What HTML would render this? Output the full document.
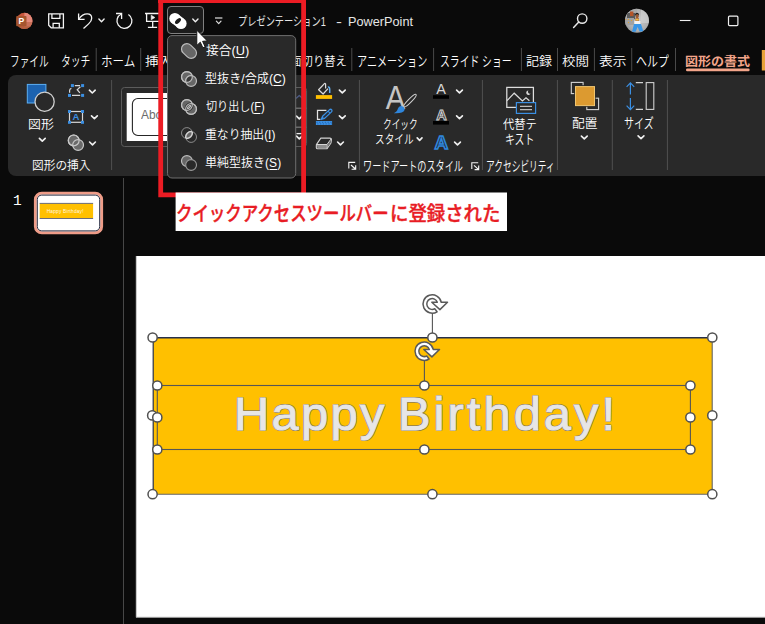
<!DOCTYPE html>
<html lang="ja"><head><meta charset="utf-8"><title>PowerPoint</title>
<style>
html,body{margin:0;padding:0;background:#0a0a0a;}
body{width:765px;height:624px;position:relative;overflow:hidden;font-family:'Liberation Sans','Noto Sans CJK JP',sans-serif;}
.abs{position:absolute;}
.t{position:absolute;white-space:nowrap;transform-origin:0 50%;display:inline-block;}
.t u{text-decoration:underline;text-underline-offset:1.5px;text-decoration-thickness:1px;}
.hb{position:absolute;top:381.7px;height:64px;font:400 46.4px/64px "Liberation Sans",sans-serif;color:#e7e6e6;white-space:nowrap;transform-origin:0 50%;transform:scaleX(1.05);-webkit-text-stroke:1px #e7e6e6;text-shadow:1.2px 0px 0 rgba(120,112,98,0.6),-1.2px 0px 0 rgba(120,112,98,0.6),0px 1.2px 0 rgba(120,112,98,0.6),0px -1.2px 0 rgba(120,112,98,0.6),0.85px 0.85px 0 rgba(120,112,98,0.6),-0.85px 0.85px 0 rgba(120,112,98,0.6),0.85px -0.85px 0 rgba(120,112,98,0.6),-0.85px -0.85px 0 rgba(120,112,98,0.6);}
</style></head><body>

<svg class="abs" width="765" height="624" viewBox="0 0 765 624" style="left:0;top:0">
<!-- powerpoint logo -->
<defs><clipPath id="ppc"><circle cx="24.4" cy="20.9" r="8.1"/></clipPath>
<clipPath id="avc"><circle cx="637" cy="20.8" r="12"/></clipPath>
<radialGradient id="avg" cx="0.55" cy="0.45" r="0.7"><stop offset="0" stop-color="#cecece"/><stop offset="0.6" stop-color="#adadad"/><stop offset="1" stop-color="#7c7c7c"/></radialGradient>
</defs>
<g clip-path="url(#ppc)"><rect x="15" y="12" width="18" height="18" fill="#c9573c"/><rect x="24.4" y="12" width="10" height="10" fill="#e4897a"/><rect x="24.4" y="22" width="10" height="5" fill="#c97058"/><rect x="15" y="26.4" width="20" height="5" fill="#b5603f"/></g>
<rect x="16.2" y="16.1" width="10.3" height="10.2" rx="0.8" fill="#a5552f"/>
<text x="21.4" y="24.2" font-family='"Liberation Sans",sans-serif' font-weight="700" font-size="8.6" fill="#fff" text-anchor="middle">P</text>
<!-- save -->
<path d="M48.7 13.9 H63.4 V27.8 H51.2 L48.7 25.3 Z" fill="none" stroke="#f4f4f4" stroke-width="1.3" stroke-linejoin="miter"/>
<path d="M51.9 13.9 V18.3 H59.9 V13.9 M53.1 27.8 V23.3 H59.3 V27.8" fill="none" stroke="#f4f4f4" stroke-width="1.3"/>
<!-- undo -->
<path d="M78.6 13.4 V19.3 H84.6" fill="none" stroke="#f4f4f4" stroke-width="1.3"/>
<path d="M78.9 19 C81.2 15.6 84.4 13.9 87.2 13.9 C90 13.9 91.7 15.8 91.7 18.2 C91.7 20.6 90.4 22.2 88.6 23.9 L83.5 28.6" fill="none" stroke="#f4f4f4" stroke-width="1.3"/>
<path d="M98.9 19.1 L101.5 21.7 L104.1 19.1" fill="none" stroke="#f0f0f0" stroke-width="1.4" stroke-linecap="round" stroke-linejoin="round"/>
<!-- redo -->
<path d="M121.4 14 A7.5 7.5 0 1 0 128.4 14.5" fill="none" stroke="#f4f4f4" stroke-width="1.3"/>
<path d="M116 13.5 H121.6 V19" fill="none" stroke="#f4f4f4" stroke-width="1.3"/>
<!-- present -->
<path d="M145 13.5 H161 M146.6 13.5 V21.3 H161 M152.7 21.3 V27.4 M147.9 27.4 H157.1" fill="none" stroke="#f4f4f4" stroke-width="1.3"/>
<path d="M151.2 15.2 L154.9 17.5 L151.2 19.8 Z" fill="#f0f0f0" stroke="#f4f4f4" stroke-width="0.6" stroke-linejoin="round"/>
<!-- qat button -->
<rect x="167.5" y="6.5" width="36" height="27" rx="3.5" fill="#1c1c1c" stroke="#808080" stroke-width="1"/>
<circle cx="174.9" cy="18.5" r="5.6" fill="#fff"/><circle cx="181" cy="23.5" r="5.6" fill="#fff"/><path d="M175.4 19 L180.6 23" stroke="#fff" stroke-width="11"/>
<ellipse cx="178" cy="21" rx="3.6" ry="1.9" fill="#1c1c1c" transform="rotate(-42 178 21)"/>
<path d="M192.8 19.1 L195.4 21.7 L198.0 19.1" fill="none" stroke="#f0f0f0" stroke-width="1.4" stroke-linecap="round" stroke-linejoin="round"/>
<!-- customize qat -->
<path d="M215 18 H222.4" stroke="#e0e0e0" stroke-width="1.2" fill="none"/>
<path d="M216.4 21.2 L218.7 23.6 L221.0 21.2" fill="none" stroke="#e0e0e0" stroke-width="1.2" stroke-linecap="round" stroke-linejoin="round"/>
<!-- search -->
<circle cx="582.2" cy="18.6" r="4.7" fill="none" stroke="#e8e8e8" stroke-width="1.4"/>
<path d="M578.8 22 L573.6 27.4" stroke="#e8e8e8" stroke-width="1.5" stroke-linecap="round"/>
<!-- avatar -->
<g clip-path="url(#avc)"><rect x="624" y="8" width="26" height="26" fill="url(#avg)"/>
<rect x="624" y="8" width="13" height="12" fill="#a9a9a9"/><rect x="627" y="13" width="8" height="6" fill="#5a5a5a"/><rect x="630" y="11.5" width="3.4" height="4.6" fill="#b4552a"/>
<rect x="625" y="18" width="9" height="7" fill="#a2a2a2"/><rect x="625.4" y="19" width="1" height="1" fill="#e0952f"/><rect x="628" y="19" width="1" height="1" fill="#e0a32f"/><rect x="631" y="20" width="1" height="1" fill="#e0a32f"/><rect x="628" y="22" width="1" height="1" fill="#e0a32f"/>
<rect x="641" y="9" width="9" height="14" fill="#d4d4d4" opacity="0.6"/>
<ellipse cx="637" cy="14.4" rx="1.9" ry="1.6" fill="#1d1d1d"/><ellipse cx="637.2" cy="16.2" rx="1.5" ry="2.1" fill="#9b5a33"/>
<rect x="635.4" y="18" width="3.6" height="3.6" fill="#b87a4a"/><rect x="635.6" y="19" width="3" height="1.4" fill="#f0c040"/><rect x="634.4" y="21" width="6" height="3.4" fill="#f4f4f4"/>
<path d="M634 24 H641 L643.4 31.5 H639.6 L637.6 27 L635.6 31.8 H632 Z" fill="#3a96e6"/>
</g>
<!-- window buttons -->
<path d="M679.8 20.5 H690.6" stroke="#f0f0f0" stroke-width="1.1"/>
<rect x="728.5" y="16.2" width="9.4" height="9.4" rx="1" fill="none" stroke="#f0f0f0" stroke-width="1.2"/>
<!-- tab separators -->
<rect x="95.7" y="48" width="1" height="23" fill="#4a4a4a"/><rect x="140.2" y="48" width="1" height="23" fill="#4a4a4a"/><rect x="351.3" y="48" width="1" height="23" fill="#4a4a4a"/><rect x="433.1" y="48" width="1" height="23" fill="#4a4a4a"/><rect x="520.9" y="48" width="1" height="23" fill="#4a4a4a"/><rect x="557.0" y="48" width="1" height="23" fill="#4a4a4a"/><rect x="593.9" y="48" width="1" height="23" fill="#4a4a4a"/><rect x="631.2" y="48" width="1" height="23" fill="#4a4a4a"/><rect x="675.0" y="48" width="1" height="23" fill="#4a4a4a"/>
<rect x="686" y="68.6" width="63.6" height="2.6" rx="1.2" fill="#f3a58a"/>
<rect x="761.8" y="50" width="4" height="20.5" fill="#e8a33a"/>
<!-- ribbon -->
<rect x="8" y="75" width="770" height="101" rx="8" fill="#292929"/>
<!-- group: insert shapes -->
<rect x="27.3" y="84.4" width="18.6" height="18.6" fill="#1c63b0" stroke="#5cb0f4" stroke-width="1"/>
<circle cx="44.6" cy="101.7" r="9.6" fill="#292929" stroke="#cfcfcf" stroke-width="1.3"/>
<path d="M39.4 138.4 L42.3 141.2 L45.2 138.4" fill="none" stroke="#f0f0f0" stroke-width="1.65" stroke-linecap="round" stroke-linejoin="round"/>
<!-- edit shape -->
<path d="M69.6 92.8 V90.6 Q69.6 88.8 71.4 88.4" fill="none" stroke="#d8d8d8" stroke-width="1.2"/>
<path d="M74.8 85.6 H80 M72 95.4 H80.2" fill="none" stroke="#d8d8d8" stroke-width="1.2"/>
<path d="M80.4 86.8 L77.2 89.7 L79.9 92.8" fill="none" stroke="#d8d8d8" stroke-width="1.2"/>
<g fill="#3b8fe2"><rect x="70.9" y="84.1" width="3" height="3"/><rect x="81.1" y="84.1" width="3" height="3"/><rect x="68" y="93.9" width="3" height="3"/><rect x="81.1" y="93.9" width="3" height="3"/></g>
<path d="M89.4 90.2 L92.3 93.0 L95.2 90.2" fill="none" stroke="#f0f0f0" stroke-width="1.65" stroke-linecap="round" stroke-linejoin="round"/>
<!-- text box -->
<rect x="69.5" y="111.5" width="13" height="10.8" fill="none" stroke="#d8d8d8" stroke-width="1.2"/>
<g fill="#3b8fe2"><rect x="68" y="110" width="3" height="3"/><rect x="81" y="110" width="3" height="3"/><rect x="68" y="120.8" width="3" height="3"/><rect x="81" y="120.8" width="3" height="3"/></g>
<text x="76" y="120.1" font-family='"Liberation Sans",sans-serif' font-size="9.6" font-weight="700" fill="#3b8fe2" text-anchor="middle">A</text>
<path d="M91.5 115.9 L94.4 118.7 L97.3 115.9" fill="none" stroke="#f0f0f0" stroke-width="1.65" stroke-linecap="round" stroke-linejoin="round"/>
<!-- merge shapes -->
<circle cx="73.7" cy="140.4" r="5.4" fill="#6a6a6a" stroke="#c8c8c8" stroke-width="1.2"/>
<circle cx="78.1" cy="145" r="5.4" fill="#6a6a6a" stroke="#c8c8c8" stroke-width="1.2"/>
<circle cx="73.7" cy="140.4" r="5.4" fill="none" stroke="#c8c8c8" stroke-width="1.2"/>
<path d="M89.6 142.0 L92.5 144.8 L95.4 142.0" fill="none" stroke="#f0f0f0" stroke-width="1.65" stroke-linecap="round" stroke-linejoin="round"/>
<rect x="111.1" y="80" width="1" height="90" fill="#505050"/>
<!-- gallery -->
<rect x="121.5" y="87.5" width="185.1" height="59" rx="3" fill="none" stroke="#5c5c5c" stroke-width="1"/>
<rect x="126.7" y="93" width="60" height="48" fill="#fff"/>
<rect x="132.4" y="98.5" width="60" height="37" rx="5.5" fill="#fff" stroke="#262626" stroke-width="1.1"/>
<!-- gallery scroll -->
<path d="M292 108.2 H306.4 M292 127.3 H306.4" stroke="#6a6a6a" stroke-width="1.6"/>
<path d="M296.5 98.1 L299.3 95.5 L302.1 98.1" fill="none" stroke="#4c5a86" stroke-width="1.3" stroke-linecap="round" stroke-linejoin="round"/>
<path d="M296.5 116.2 L299.3 118.8 L302.1 116.2" fill="none" stroke="#f0f0f0" stroke-width="1.65" stroke-linecap="round" stroke-linejoin="round"/>
<path d="M296.4 133.6 H302.2" stroke="#ececec" stroke-width="1.3"/><path d="M296.5 136.2 L299.3 138.9 L302.1 136.2" fill="none" stroke="#f0f0f0" stroke-width="1.65" stroke-linecap="round" stroke-linejoin="round"/>
<!-- shape fill -->
<path d="M324.2 83.9 L318.6 89.7 L323.1 94 L328 88.7" fill="none" stroke="#dcdcdc" stroke-width="1.25" stroke-linejoin="round"/>
<path d="M324.2 84 Q324.9 82.9 325.6 84 V88.6" fill="none" stroke="#dcdcdc" stroke-width="1.2"/>
<path d="M327.9 87.1 Q329.7 86.7 329.7 89.2 V93" fill="none" stroke="#64b2f4" stroke-width="1.5"/>
<rect x="315.9" y="95.1" width="16.2" height="3.8" fill="#ffc000"/>
<path d="M339.4 90.1 L342.3 92.9 L345.2 90.1" fill="none" stroke="#f0f0f0" stroke-width="1.65" stroke-linecap="round" stroke-linejoin="round"/>
<!-- shape outline -->
<path d="M320.4 119.3 H317.5 V110.4 H326.4" fill="none" stroke="#e4e4e4" stroke-width="1.25"/>
<path d="M321.2 119.5 L322.6 116.2 L329.6 109.6 Q330.8 108.8 331.7 109.8 Q332.5 110.8 331.5 111.9 L324.6 118.4 Z" fill="#262c36" stroke="#3b8fe2" stroke-width="1.3" stroke-linejoin="round"/>
<path d="M328 111.2 L330 113.2" stroke="#3b8fe2" stroke-width="1.1"/>
<path d="M321.2 119.5 L322.4 116.6 L324.2 118.2 Z" fill="#3b8fe2"/>
<rect x="315.9" y="121" width="16.2" height="4" fill="#3b8fe2"/>
<path d="M316.4 122.3 H332 M317.2 123.9 H332" stroke="#1b5ea8" stroke-width="0.8" stroke-dasharray="1.2 1.6"/>
<path d="M339.4 115.9 L342.3 118.7 L345.2 115.9" fill="none" stroke="#f0f0f0" stroke-width="1.65" stroke-linecap="round" stroke-linejoin="round"/>
<!-- shape effects -->
<path d="M316.4 144.6 L320.8 138.1 H329.8 Q331.6 138.1 331.4 139.9 L331 143 L327 148.8 H317.6 Q316.3 148.8 316.3 147.5 Z" fill="#292929" stroke="#d4d4d4" stroke-width="1.1" stroke-linejoin="round"/>
<path d="M316.9 145 H326.6 V148.3 H317.4 Z" fill="#8e8e8e"/>
<path d="M327.3 144.8 L330.9 140 L330.6 142.8 L327.3 147.6 Z" fill="#7a7a7a"/>
<path d="M316.6 144.5 H327 L331.2 138.8 M327 144.5 V148.6" fill="none" stroke="#d4d4d4" stroke-width="1"/>
<path d="M337.6 142.0 L340.5 144.8 L343.4 142.0" fill="none" stroke="#f0f0f0" stroke-width="1.65" stroke-linecap="round" stroke-linejoin="round"/>
<path d="M348.8 168.6 V162.4 H355.2" fill="none" stroke="#f4f4f4" stroke-width="1.1"/><path d="M351.0 165.0 L355.4 169.0 M351.6 169.2 H355.7 V165.2" fill="none" stroke="#f4f4f4" stroke-width="1.1"/><path d="M355.7 169.3 H353.2 L355.7 166.8 Z" fill="#f4f4f4"/>
<rect x="358.9" y="80" width="1" height="90" fill="#505050"/>
<!-- quick styles big A -->
<text x="395.4" y="109" font-family='"Liberation Sans",sans-serif' font-size="32.5" fill="#c4c4c4" text-anchor="middle" transform="translate(395.4 0) scale(0.9 1) translate(-395.4 0)">A</text>
<ellipse cx="410" cy="100.6" rx="8.6" ry="1.7" transform="rotate(-45 410 100.6)" fill="#292929" stroke="#cfcfcf" stroke-width="1.1"/>
<path d="M402 106.2 Q405.2 107.2 404.6 110 Q403 113.8 393.8 113.2 Q397.4 111.6 397.8 108.8 Q398.8 105.6 402 106.2 Z" fill="#2f86dc"/>
<path d="M417.2 137.9 L419.6 140.4 L422.0 137.9" fill="none" stroke="#f0f0f0" stroke-width="1.65" stroke-linecap="round" stroke-linejoin="round"/>
<!-- text fill -->
<text x="441.2" y="93.9" font-family='"Liberation Sans",sans-serif' font-size="14.5" fill="#d8d8d8" text-anchor="middle">A</text>
<rect x="433" y="95.2" width="16" height="3.6" fill="#000"/>
<path d="M456.6 90.1 L459.5 92.9 L462.4 90.1" fill="none" stroke="#f0f0f0" stroke-width="1.65" stroke-linecap="round" stroke-linejoin="round"/>
<!-- text outline -->
<text x="441.4" y="119.8" font-family='"Liberation Sans",sans-serif' font-size="14.5" font-weight="700" fill="#2d2d2d" stroke="#d2d2d2" stroke-width="0.95" text-anchor="middle">A</text>
<rect x="433" y="121" width="16" height="3.6" fill="#000"/>
<path d="M456.6 115.9 L459.5 118.7 L462.4 115.9" fill="none" stroke="#f0f0f0" stroke-width="1.65" stroke-linecap="round" stroke-linejoin="round"/>
<!-- text effects -->
<text x="441.3" y="149.4" font-family='"Liberation Sans",sans-serif' font-size="19" font-weight="700" fill="#22303f" stroke="#2f86dc" stroke-width="1.5" text-anchor="middle">A</text>
<path d="M454.6 142.1 L457.5 144.9 L460.4 142.1" fill="none" stroke="#f0f0f0" stroke-width="1.65" stroke-linecap="round" stroke-linejoin="round"/>
<path d="M471.8 169.0 V162.8 H478.2" fill="none" stroke="#f4f4f4" stroke-width="1.1"/><path d="M474.0 165.4 L478.4 169.4 M474.6 169.6 H478.7 V165.6" fill="none" stroke="#f4f4f4" stroke-width="1.1"/><path d="M478.7 169.7 H476.2 L478.7 167.2 Z" fill="#f4f4f4"/>
<rect x="481.9" y="80" width="1" height="90" fill="#505050"/>
<!-- alt text -->
<rect x="506.8" y="87.4" width="26.6" height="20" fill="none" stroke="#dedede" stroke-width="1.25"/>
<path d="M507 100.6 L514.2 93.2 L522.4 101 L526 97.8 L529.4 100.8" fill="none" stroke="#dedede" stroke-width="1.2"/>
<path d="M528.4 90.4 A2.3 2.3 0 1 0 530.6 93.6 A2 2 0 0 1 528.4 90.4 Z" fill="#d8d8d8"/>
<rect x="516.4" y="102.6" width="19.2" height="10.8" fill="#292929" stroke="#3b8fe2" stroke-width="1.2"/>
<path d="M520 106.4 H532 M520 109.6 H532" stroke="#bdbdbd" stroke-width="1.1"/>
<rect x="556.9" y="80" width="1" height="90" fill="#505050"/>
<!-- arrange -->
<rect x="571.3" y="82.4" width="11.8" height="11.2" fill="none" stroke="#d4d4d4" stroke-width="1.1"/>
<rect x="586.8" y="98.2" width="11.8" height="11.4" fill="none" stroke="#d4d4d4" stroke-width="1.1"/>
<rect x="574.2" y="85.2" width="21.4" height="21.6" fill="#292929"/>
<rect x="575.5" y="86.6" width="19" height="19" fill="#dc9a30" stroke="#f0c570" stroke-width="1"/>
<path d="M581.4 136.1 L584.3 138.9 L587.2 136.1" fill="none" stroke="#f0f0f0" stroke-width="1.65" stroke-linecap="round" stroke-linejoin="round"/>
<rect x="611.8" y="80" width="1" height="90" fill="#505050"/>
<!-- size -->
<path d="M630.4 83 V94.6 M626.6 86.8 L630.4 82.8 L634.2 86.8 M630.4 98 V109.4 M626.6 105.6 L630.4 109.6 L634.2 105.6" fill="none" stroke="#3b8fe2" stroke-width="1.2"/>
<rect x="646.2" y="82.6" width="7.6" height="26.8" fill="none" stroke="#d0d0d0" stroke-width="1.1"/>
<path d="M635.8 82.6 H643 M635.8 109.4 H643" stroke="#d0d0d0" stroke-width="1.1"/>
<path d="M638.1 135.8 L641.0 138.6 L643.9 135.8" fill="none" stroke="#f0f0f0" stroke-width="1.65" stroke-linecap="round" stroke-linejoin="round"/>
<rect x="666.9" y="80" width="1" height="90" fill="#505050"/>
<!-- pane divider -->
<rect x="123" y="178" width="1" height="446" fill="#474747"/>
<!-- thumbnail -->
<rect x="35.3" y="193.1" width="66.4" height="39.8" rx="6.5" fill="#fff" stroke="#ee9c88" stroke-width="2.8"/>
<rect x="37.3" y="195.1" width="62.4" height="35.8" rx="4.4" fill="none" stroke="#262b40" stroke-width="1"/>
<rect x="39.7" y="203.4" width="53.4" height="15" fill="#ffc000"/>
<path d="M39.7 203.4 H93.1 M39.7 218.5 H93.1" stroke="#5a5f78" stroke-width="0.9"/>
<text x="65.2" y="212.6" font-family='"Liberation Sans",sans-serif' font-size="4.8" fill="#fff" fill-opacity="0.9" text-anchor="middle" font-weight="400" letter-spacing="0.2">Happy Birthday!</text>
<!-- slide -->
<rect x="136" y="256" width="640" height="361.5" fill="#fff"/>
<path d="M136.2 256 V617.3 H765" fill="none" stroke="#a0a0a0" stroke-width="0.8"/>
<!-- shape -->
<rect x="153.2" y="337.6" width="559" height="156.6" fill="#ffc000"/>
<path d="M153.2 337.6 V494.2" stroke="#28304a" stroke-width="1.2"/>
<path d="M153.2 337.8 H712.2" stroke="#28304a" stroke-width="1.6"/>
<path d="M712.2 337.6 V494.2 H153.2" fill="none" stroke="#666" stroke-width="1.1"/>
<!-- inner text box -->
<rect x="157.3" y="385.5" width="533.1" height="64" fill="none" stroke="#565656" stroke-width="1.1"/>
<!-- rotate stems -->
<path d="M432.4 313 V337.4 M424.4 360 V385.5" stroke="#555" stroke-width="1.1"/>
</svg>
<span id="title1" class="t" style="left:238.25px;top:13.3px;font:400 12px/18.0px 'Liberation Sans','Noto Sans CJK JP',sans-serif;color:#e6e6e6;transform:scaleX(0.7679);">プレゼンテーション1</span>
<span id="title2" class="t" style="left:335.51px;top:13.3px;font:400 12px/18.0px 'Liberation Sans','Noto Sans CJK JP',sans-serif;color:#e6e6e6;transform:scaleX(1.4761);">-</span>
<span id="title3" class="t" style="left:347.86px;top:13.3px;font:400 12px/18.0px 'Liberation Sans','Noto Sans CJK JP',sans-serif;color:#e6e6e6;transform:scaleX(1.0599);">PowerPoint</span>
<span id="tab1" class="t" style="left:10.47px;top:50.5px;font:350 14px/21.0px 'Liberation Sans','Noto Sans CJK JP',sans-serif;color:#ffffff;transform:scaleX(0.6905);">ファイル</span>
<span id="tab2" class="t" style="left:61.39px;top:50.5px;font:350 14px/21.0px 'Liberation Sans','Noto Sans CJK JP',sans-serif;color:#ffffff;transform:scaleX(0.6988);">タッチ</span>
<span id="tab3" class="t" style="left:100.77px;top:50.5px;font:350 14px/21.0px 'Liberation Sans','Noto Sans CJK JP',sans-serif;color:#ffffff;transform:scaleX(0.8222);">ホーム</span>
<span id="tab4" class="t" style="left:145.43px;top:53.1px;font:350 12px/18.0px 'Liberation Sans','Noto Sans CJK JP',sans-serif;color:#ffffff;transform:scaleX(1.1353);">挿入</span>
<span id="tab5" class="t" style="left:279.32px;top:53.1px;font:350 12px/18.0px 'Liberation Sans','Noto Sans CJK JP',sans-serif;color:#ffffff;transform:scaleX(0.9413);">画面切り替え</span>
<span id="tab6" class="t" style="left:357.07px;top:50.5px;font:350 14px/21.0px 'Liberation Sans','Noto Sans CJK JP',sans-serif;color:#ffffff;transform:scaleX(0.7207);">アニメーション</span>
<span id="tab7" class="t" style="left:440.18px;top:50.5px;font:350 14px/21.0px 'Liberation Sans','Noto Sans CJK JP',sans-serif;color:#ffffff;transform:scaleX(0.7030);">スライド ショー</span>
<span id="tab8" class="t" style="left:526.36px;top:53.1px;font:350 12px/18.0px 'Liberation Sans','Noto Sans CJK JP',sans-serif;color:#ffffff;transform:scaleX(1.0879);">記録</span>
<span id="tab9" class="t" style="left:562.38px;top:53.1px;font:350 12px/18.0px 'Liberation Sans','Noto Sans CJK JP',sans-serif;color:#ffffff;transform:scaleX(1.1270);">校閲</span>
<span id="tab10" class="t" style="left:599.24px;top:53.1px;font:350 12px/18.0px 'Liberation Sans','Noto Sans CJK JP',sans-serif;color:#ffffff;transform:scaleX(1.1469);">表示</span>
<span id="tab11" class="t" style="left:636.05px;top:50.5px;font:350 14px/21.0px 'Liberation Sans','Noto Sans CJK JP',sans-serif;color:#ffffff;transform:scaleX(0.7825);">ヘルプ</span>
<span id="tab12" class="t" style="left:684.75px;top:53.1px;font:700 12px/18.0px 'Liberation Sans','Noto Sans CJK JP',sans-serif;color:#f3a58a;transform:scaleX(1.0859);">図形の書式</span>
<span id="r1" class="t" style="left:27.73px;top:116.3px;font:350 12px/18.0px 'Liberation Sans','Noto Sans CJK JP',sans-serif;color:#ffffff;transform:scaleX(1.0783);">図形</span>
<span id="r2" class="t" style="left:32.49px;top:157.2px;font:350 12px/18.0px 'Liberation Sans','Noto Sans CJK JP',sans-serif;color:#ffffff;transform:scaleX(0.9755);">図形の挿入</span>
<span id="r3" class="t" style="left:382.91px;top:116.4px;font:350 12.5px/18.8px 'Liberation Sans','Noto Sans CJK JP',sans-serif;color:#ffffff;transform:scaleX(0.6933);">クイック</span>
<span id="r4" class="t" style="left:374.58px;top:131.0px;font:350 12.5px/18.8px 'Liberation Sans','Noto Sans CJK JP',sans-serif;color:#ffffff;transform:scaleX(0.7703);">スタイル</span>
<span id="r5" class="t" style="left:362.60px;top:156.5px;font:350 13.5px/20.2px 'Liberation Sans','Noto Sans CJK JP',sans-serif;color:#ffffff;transform:scaleX(0.6768);">ワードアートのスタイル</span>
<span id="r6" class="t" style="left:502.77px;top:116.3px;font:350 12px/18.0px 'Liberation Sans','Noto Sans CJK JP',sans-serif;color:#ffffff;transform:scaleX(0.9418);">代替テ</span>
<span id="r7" class="t" style="left:505.03px;top:130.2px;font:350 13.5px/20.2px 'Liberation Sans','Noto Sans CJK JP',sans-serif;color:#ffffff;transform:scaleX(0.7319);">キスト</span>
<span id="r8" class="t" style="left:485.95px;top:156.5px;font:350 13.5px/20.2px 'Liberation Sans','Noto Sans CJK JP',sans-serif;color:#ffffff;transform:scaleX(0.6450);">アクセシビリティ</span>
<span id="r9" class="t" style="left:572.21px;top:114.6px;font:350 12px/18.0px 'Liberation Sans','Noto Sans CJK JP',sans-serif;color:#ffffff;transform:scaleX(1.0554);">配置</span>
<span id="r10" class="t" style="left:624.21px;top:113.5px;font:350 13.5px/20.2px 'Liberation Sans','Noto Sans CJK JP',sans-serif;color:#ffffff;transform:scaleX(0.7386);">サイズ</span>
<span id="abc" class="t" style="left:140.75px;top:106.3px;font:400 12px/18.0px 'Liberation Sans','Noto Sans CJK JP',sans-serif;color:#6b6b6b;transform:scaleX(0.9922);">Abc</span>
<span id="n1" class="t" style="left:12.89px;top:189.6px;font:400 15.5px/23.2px 'Liberation Mono',monospace;color:#ffffff;transform:scaleX(0.9350);">1</span>
<div id="hb" class="hb" style="left:234.2px;letter-spacing:2.3px">Happy</div><div id="hb2" class="hb" style="left:397.6px;letter-spacing:2.95px">Birthday!</div>

<svg class="abs" width="765" height="624" viewBox="0 0 765 624" style="left:0;top:0">
<g transform="translate(432.2,304)">
<path d="M-0.4 -1.75 L7.7 5.65 L15.3 -1.75 L9.03 -1.75 A9.2 9.2 0 1 0 4.88 7.8 L2.54 4.77 A5.4 5.4 0 1 1 5.1 -1.75 Z" fill="#fff" stroke="#595959" stroke-width="1.5" stroke-linejoin="round"/>
</g>
<g transform="translate(424.2,351.2)">
<path d="M-0.4 -1.75 L7.7 5.65 L15.3 -1.75 L9.03 -1.75 A9.2 9.2 0 1 0 4.88 7.8 L2.54 4.77 A5.4 5.4 0 1 1 5.1 -1.75 Z" fill="#fff" stroke="#595959" stroke-width="1.5" stroke-linejoin="round"/>
</g>
<circle cx="152.6" cy="337.5" r="4.6" fill="#fff" stroke="#505050" stroke-width="1.5"/><circle cx="432.4" cy="337.5" r="4.6" fill="#fff" stroke="#505050" stroke-width="1.5"/><circle cx="712.3" cy="337.5" r="4.6" fill="#fff" stroke="#505050" stroke-width="1.5"/><circle cx="152.2" cy="415.4" r="4.6" fill="#fff" stroke="#505050" stroke-width="1.5"/><circle cx="712.3" cy="415.4" r="4.6" fill="#fff" stroke="#505050" stroke-width="1.5"/><circle cx="152.6" cy="494.2" r="4.6" fill="#fff" stroke="#505050" stroke-width="1.5"/><circle cx="432.4" cy="494.2" r="4.6" fill="#fff" stroke="#505050" stroke-width="1.5"/><circle cx="712.3" cy="494.2" r="4.6" fill="#fff" stroke="#505050" stroke-width="1.5"/>
<circle cx="157.3" cy="385.5" r="4.6" fill="#fff" stroke="#505050" stroke-width="1.5"/><circle cx="424.4" cy="385.5" r="4.6" fill="#fff" stroke="#505050" stroke-width="1.5"/><circle cx="690.4" cy="385.5" r="4.6" fill="#fff" stroke="#505050" stroke-width="1.5"/><circle cx="157.3" cy="417.4" r="4.6" fill="#fff" stroke="#505050" stroke-width="1.5"/><circle cx="690.4" cy="417.4" r="4.6" fill="#fff" stroke="#505050" stroke-width="1.5"/><circle cx="157.3" cy="449.5" r="4.6" fill="#fff" stroke="#505050" stroke-width="1.5"/><circle cx="424.4" cy="449.5" r="4.6" fill="#fff" stroke="#505050" stroke-width="1.5"/><circle cx="690.4" cy="449.5" r="4.6" fill="#fff" stroke="#505050" stroke-width="1.5"/>
</svg>

<svg class="abs" width="765" height="624" viewBox="0 0 765 624" style="left:0;top:0">
<rect x="167.5" y="35.6" width="128.2" height="142.4" rx="4.5" fill="#292929" stroke="#6e6e6e" stroke-width="1"/>
<path d="M186.9 49.0 L191.1 53.0" stroke="#bcbcbc" stroke-width="12.0" stroke-linecap="round"/><path d="M186.9 49.0 L191.1 53.0" stroke="#666666" stroke-width="9.600000000000001" stroke-linecap="round"/><circle cx="186.9" cy="77.0" r="5.4" fill="#666666" stroke="#bcbcbc" stroke-width="1.2"/><circle cx="191.1" cy="81.0" r="5.4" fill="#666666" stroke="#bcbcbc" stroke-width="1.2"/><clipPath id="cl2"><circle cx="186.9" cy="77.0" r="5.4"/></clipPath><circle cx="191.1" cy="81.0" r="5.4" fill="#383838" stroke="#bcbcbc" stroke-width="1.2" clip-path="url(#cl2)"/><circle cx="186.9" cy="77.0" r="5.4" fill="none" stroke="#bcbcbc" stroke-width="1.2"/><circle cx="186.9" cy="105.0" r="5.4" fill="#666666" stroke="#bcbcbc" stroke-width="1.2"/><circle cx="191.1" cy="109.0" r="5.4" fill="#666666" stroke="#bcbcbc" stroke-width="1.2"/><clipPath id="cl3"><circle cx="186.9" cy="105.0" r="5.4"/></clipPath><clipPath id="cl3b"><circle cx="191.1" cy="109.0" r="5.4"/></clipPath><clipPath id="cl3c"><circle cx="186.9" cy="105.0" r="3.7"/></clipPath><circle cx="191.1" cy="109.0" r="5.4" fill="none" stroke="#2a2a2a" stroke-width="2.6" clip-path="url(#cl3)"/><circle cx="186.9" cy="105.0" r="5.4" fill="none" stroke="#2a2a2a" stroke-width="2.6" clip-path="url(#cl3b)"/><circle cx="191.1" cy="109.0" r="3.7" fill="#666666" stroke="#c4c4c4" stroke-width="1.1" clip-path="url(#cl3c)"/><clipPath id="cl3d"><circle cx="191.1" cy="109.0" r="3.7"/></clipPath><circle cx="186.9" cy="105.0" r="3.7" fill="none" stroke="#c4c4c4" stroke-width="1.1" clip-path="url(#cl3d)"/><circle cx="186.9" cy="105.0" r="5.4" fill="none" stroke="#bcbcbc" stroke-width="1.2"/><circle cx="191.1" cy="109.0" r="5.4" fill="none" stroke="#bcbcbc" stroke-width="1.2"/><circle cx="186.9" cy="133.0" r="5.4" fill="none" stroke="#8c8c8c" stroke-width="1"/><circle cx="191.1" cy="137.0" r="5.4" fill="none" stroke="#8c8c8c" stroke-width="1"/><clipPath id="cl4"><circle cx="186.9" cy="133.0" r="5.4"/></clipPath><circle cx="191.1" cy="137.0" r="5.4" fill="#666666" stroke="#d2d2d2" stroke-width="1.5" clip-path="url(#cl4)"/><clipPath id="cl4b"><circle cx="191.1" cy="137.0" r="5.4"/></clipPath><circle cx="186.9" cy="133.0" r="5.4" fill="none" stroke="#d2d2d2" stroke-width="1.5" clip-path="url(#cl4b)"/><circle cx="186.9" cy="161.0" r="5.4" fill="#666666" stroke="#bcbcbc" stroke-width="1.2"/><circle cx="191.1" cy="165.0" r="5.4" fill="#292929" stroke="#9a9a9a" stroke-width="1.1"/>
<rect x="235.71" y="57.00" width="8.86" height="1" fill="#fff"/><rect x="273.39" y="85.00" width="8.37" height="1" fill="#fff"/><rect x="254.08" y="113.00" width="6.40" height="1" fill="#fff"/><rect x="268.50" y="141.00" width="2.90" height="1" fill="#fff"/><rect x="269.49" y="169.00" width="7.64" height="1" fill="#fff"/>
</svg>
<span id="m1" class="t" style="left:205.67px;top:42.0px;font:350 12.5px/18.8px 'Liberation Sans','Noto Sans CJK JP',sans-serif;color:#ffffff;transform:scaleX(1.0240);">接合(U)</span>
<span id="m2" class="t" style="left:205.21px;top:70.0px;font:350 12.5px/18.8px 'Liberation Sans','Noto Sans CJK JP',sans-serif;color:#ffffff;transform:scaleX(0.9695);">型抜き/合成(C)</span>
<span id="m3" class="t" style="left:205.76px;top:98.0px;font:350 12.5px/18.8px 'Liberation Sans','Noto Sans CJK JP',sans-serif;color:#ffffff;transform:scaleX(0.8888);">切り出し(F)</span>
<span id="m4" class="t" style="left:205.20px;top:126.0px;font:350 12.5px/18.8px 'Liberation Sans','Noto Sans CJK JP',sans-serif;color:#ffffff;transform:scaleX(0.9469);">重なり抽出(I)</span>
<span id="m5" class="t" style="left:205.18px;top:154.0px;font:350 12.5px/18.8px 'Liberation Sans','Noto Sans CJK JP',sans-serif;color:#ffffff;transform:scaleX(0.9619);">単純型抜き(S)</span>

<svg class="abs" width="765" height="624" viewBox="0 0 765 624" style="left:0;top:0">
<!-- red annotation -->
<path d="M160.7 -3 V194.8 H303.6 V-3" fill="none" stroke="#ec1c24" stroke-width="4.8"/>
<path d="M158 1.4 H306" stroke="#ec1c24" stroke-width="3"/>
<rect x="175.6" y="192.5" width="331.4" height="38.5" fill="#fff"/>
<!-- cursor -->
<path d="M196.8 30.2 V45.4 L200.3 42.2 L202.9 47.8 L205.1 46.8 L202.6 41.3 L207.3 40.9 Z" fill="#fff" stroke="#111" stroke-width="0.9" stroke-linejoin="round"/>
</svg>
<span id="cap" class="t" style="left:176.37px;top:198.8px;font:500 20px/30.0px 'Liberation Sans','Noto Sans CJK JP',sans-serif;color:#e81c24;transform:scaleX(0.8212);-webkit-text-stroke:0.4px #e81c24;">クイックアクセスツールバー</span>
<span id="cap2" class="t" style="left:389.64px;top:198.8px;font:500 20px/30.0px 'Liberation Sans','Noto Sans CJK JP',sans-serif;color:#e81c24;transform:scaleX(0.9195);-webkit-text-stroke:0.4px #e81c24;">に登録された</span>
</body></html>
